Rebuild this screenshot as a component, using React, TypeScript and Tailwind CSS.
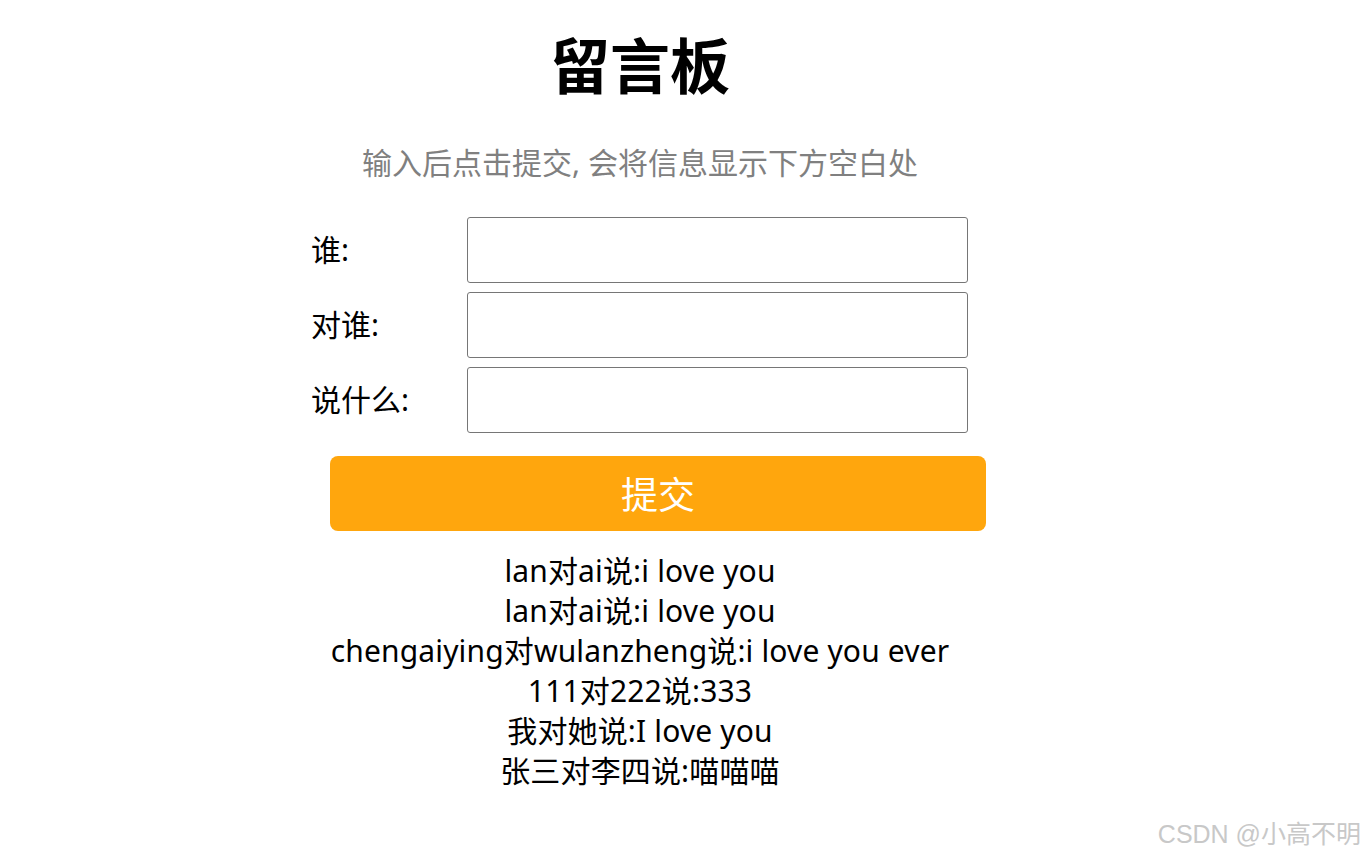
const messages = [
  "lan对ai说:i love you",
  "lan对ai说:i love you",
  "chengaiying对wulanzheng说:i love you ever",
  "111对222说:333",
  "我对她说:I love you",
  "张三对李四说:喵喵喵",
];

const fields = ["谁:", "对谁:", "说什么:"];

export default function App() {
  return (
    <div className="relative min-h-[858px] w-full bg-white font-['Noto_Sans','Noto_Sans_CJK_SC',sans-serif] text-black">
      <div className="w-[1280px] pt-[26px]">
        {/* Title */}
        <h1 className="text-center text-[60px] font-bold leading-[80px]">留言板</h1>

        {/* Hint */}
        <p className="mt-[37px] text-center text-[30px] leading-[40px] text-[#808080]">
          输入后点击提交, 会将信息显示下方空白处
        </p>

        {/* Form */}
        <div className="mx-auto mt-[34px] flex w-[658px] flex-col gap-[9px] pr-[1px]">
          {fields.map((label) => (
            <div key={label} className="flex items-center">
              <span className="w-[156px] text-[30px] leading-[40px]">{label}</span>
              <input
                type="text"
                className="h-[66px] w-[501px] rounded-[3px] border border-[#767676] bg-white px-2 text-[24px] outline-none"
              />
            </div>
          ))}
        </div>

        <div className="mt-[23px] pl-[330px]">
          <button className="h-[75px] w-[656px] rounded-[8px] bg-[#ffa60d] pt-[3px] text-[37px] text-white">
            提交
          </button>
        </div>

        {/* Messages */}
        <div className="mt-[20px] text-center text-[30px] leading-[40px] tracking-[0.15px]">
          {messages.map((m, i) => (
            <div key={i}>{m}</div>
          ))}
        </div>
      </div>

      <div className="absolute bottom-[8px] right-[4px] font-['Liberation_Sans','Noto_Sans_CJK_SC',sans-serif] text-[25px] leading-[32px] text-[#c8c8c8]">
        CSDN @小高不明
      </div>
    </div>
  );
}
